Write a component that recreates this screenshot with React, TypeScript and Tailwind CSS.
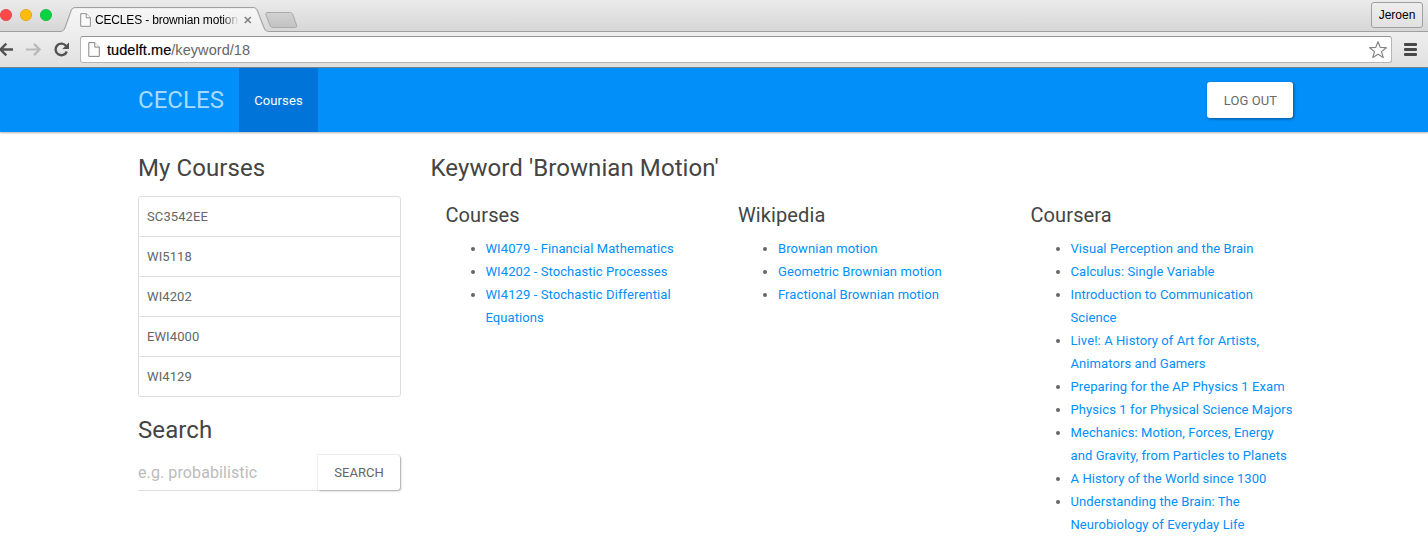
import React from "react";

const courses = ["SC3542EE", "WI5118", "WI4202", "EWI4000", "WI4129"];

const columns = [
  {
    title: "Courses",
    links: [
      "WI4079 - Financial Mathematics",
      "WI4202 - Stochastic Processes",
      "WI4129 - Stochastic Differential Equations",
    ],
  },
  {
    title: "Wikipedia",
    links: ["Brownian motion", "Geometric Brownian motion", "Fractional Brownian motion"],
  },
  {
    title: "Coursera",
    links: [
      "Visual Perception and the Brain",
      "Calculus: Single Variable",
      "Introduction to Communication Science",
      "Live!: A History of Art for Artists, Animators and Gamers",
      "Preparing for the AP Physics 1 Exam",
      "Physics 1 for Physical Science Majors",
      "Mechanics: Motion, Forces, Energy and Gravity, from Particles to Planets",
      "A History of the World since 1300",
      "Understanding the Brain: The Neurobiology of Everyday Life",
    ],
  },
];

function PageIcon({ className }: { className: string }) {
  return (
    <svg viewBox="0 0 12 15" className={className} fill="#fbfbfb" stroke="#858585" strokeWidth="1">
      <path d="M.8.6h6L11.300 5.100v9.300H.8z" />
      <path d="M6.800.6v4.500h4.500" />
    </svg>
  );
}

function TabStrip() {
  return (
    <div className="relative h-8 bg-linear-to-b from-[#ebebeb] to-[#d6d6d6]">
      <svg className="absolute inset-0 h-8 w-full" fill="none">
        <defs>
          <linearGradient id="tab" x1="0" y1="0" x2="0" y2="1">
            <stop offset="0" stopColor="#f6f6f6" />
            <stop offset="1" stopColor="#eeeeee" />
          </linearGradient>
          <linearGradient id="newtab" x1="0" y1="0" x2="0" y2="1">
            <stop offset="0" stopColor="#d2d2d2" />
            <stop offset="1" stopColor="#c2c2c2" />
          </linearGradient>
        </defs>
        <circle cx="6" cy="15" r="5.6" fill="#fc4848" stroke="#e33e41" strokeWidth=".8" />
        <circle cx="26" cy="15" r="5.6" fill="#fdbc0a" stroke="#e0a010" strokeWidth=".8" />
        <circle cx="46" cy="15" r="5.6" fill="#0ad341" stroke="#12b238" strokeWidth=".8" />
        <path
          d="M0 31.500H60C63 31.500 64 30 65 27.500L70.500 12C71.500 9 72.500 7.500 75.500 7.500H253C256 7.500 257 9 258 12L264 27.500C265 30 266 31.500 269 31.500H1428"
          stroke="#a0a0a0"
        />
        <path
          d="M61 32C63.500 31.500 65 30.500 66 28L71.500 12.500C72.300 9.500 73.500 8.500 76 8.500H252.500C255 8.500 256.200 9.500 257 12.500L263 28C264 30.500 265.500 31.500 268 32Z"
          fill="url(#tab)"
        />
        <path
          d="M268 12.500H289.500C291.500 12.500 292.500 13.500 293 15L296.500 25C297 27 296.500 27.500 294.500 27.500H274C272 27.500 270.500 27 270 25.500L266 15C265.500 13.500 266 12.500 268 12.500Z"
          fill="url(#newtab)"
          stroke="#a9a9a9"
        />
        <path d="M244.800 17L250.800 23M250.800 17L244.800 23" stroke="#808080" strokeWidth="1.600" />
      </svg>
      <div className="absolute left-20 top-[13px] flex items-center">
        <PageIcon className="h-3.5 w-[11px]" />
      </div>
      <div className="absolute left-[95px] top-[12px] h-4 w-[144px] overflow-hidden whitespace-nowrap font-['Liberation_Sans',sans-serif] text-[12px] leading-4 tracking-[-0.160px] text-black [mask-image:linear-gradient(to_right,black_88%,transparent)]">
        CECLES - brownian motion
      </div>
      <div className="absolute right-[5px] top-[2px] flex h-[26px] w-[52px] items-center justify-center rounded-[3px] border border-[#a0a0a0] bg-linear-to-b from-[#eeeeee] to-[#e1e1e1] font-['Liberation_Sans',sans-serif] text-xs text-black">
        Jeroen
      </div>
    </div>
  );
}

function Toolbar() {
  return (
    <div className="flex h-9 items-center border-b border-[#7d868c] bg-linear-to-b from-[#eeeeee] to-[#e0e0e0]">
      <svg className="h-[35px] w-20 shrink-0" viewBox="0 0 80 35" fill="none" strokeWidth="2.400">
        <path d="M13 17.500H1M6.300 11.700L.5 17.500L6.300 23.300" stroke="#525252" />
        <path d="M26 17.500H39M34 11.900L39.600 17.500L34 23.100" stroke="#b9b9b9" strokeWidth="2.200" />
        <path d="M66.200 14.200A5.800 5.800 0 1 0 66.800 19.500" stroke="#525252" />
        <path d="M69 10.500V17H62.300Z" fill="#525252" />
      </svg>
      <div className="flex h-[27px] w-[1312px] items-center rounded-[3px] border border-[#b5b5b5] border-t-[#969696] bg-white pl-[7px] pr-[3px]">
        <PageIcon className="h-[15px] w-3" />
        <div className="ml-[7px] grow font-['Liberation_Sans',sans-serif] text-[14.500px] leading-5 tracking-[0.060px] text-[#666]">
          <span className="text-black [-webkit-text-stroke:0.200px_black]">tudelft.me</span>/keyword/18
        </div>
        <svg className="h-5 w-5" viewBox="0 0 20 20" fill="white" stroke="#858585" strokeWidth="1.200" strokeLinejoin="round">
          <path d="M10 1.700L12.200 7.400L18.300 7.700L13.500 11.600L15.200 17.600L10 14.200L4.800 17.600L6.500 11.600L1.700 7.700L7.800 7.400Z" />
        </svg>
      </div>
      <div className="ml-3 flex w-[13px] flex-col gap-0.5">
        <div className="h-[3px] rounded-[1px] bg-[#484848]" />
        <div className="h-[3px] rounded-[1px] bg-[#484848]" />
        <div className="h-[3px] rounded-[1px] bg-[#484848]" />
      </div>
    </div>
  );
}

function Navbar() {
  return (
    <nav className="flex h-16 items-center bg-[#028ffa] pl-[138px] pr-[135px] shadow-[0_1px_2px_rgba(0,0,0,0.3)]">
      <a className="w-[101px] text-2xl leading-[23px] tracking-[0.050px] text-[#a5dbfd]">CECLES</a>
      <a className="flex h-16 w-[79px] items-center justify-center bg-[#0174d9] pt-0.5 text-[13px] tracking-[0.100px] text-white">
        Courses
      </a>
      <button className="ml-auto h-9 w-[86px] rounded-[3px] bg-white pt-0.5 pl-px text-[13px] tracking-[0.100px] text-[#6a6a6a] shadow-[1px_1px_3px_rgba(0,0,0,0.4)]">
        LOG OUT
      </button>
    </nav>
  );
}

function Sidebar() {
  return (
    <aside className="w-[262.500px] shrink-0">
      <h1 className="text-2xl leading-[25px] tracking-[0.080px] text-[#444]">My Courses</h1>
      <ul className="mt-[15px] divide-y divide-[#ddd] rounded-[3px] border border-[#ddd]">
        {courses.map((course) => (
          <li key={course} className="h-10 px-2 text-[13px] leading-10 tracking-[0.100px] last:h-[39px]">
            {course}
          </li>
        ))}
      </ul>
      <h1 className="mt-[21px] text-2xl leading-[25px] tracking-[0.080px] text-[#444]">Search</h1>
      <form className="mt-[11px] flex">
        <input
          className="h-[37px] w-[180px] shrink-0 border-b border-[#ddd] text-base tracking-[0.100px] outline-none placeholder:text-[#bbb]"
          placeholder="e.g. probabilistic"
        />
        <button
          type="button"
          className="mt-px h-[35px] w-[82px] rounded-r-[3px] text-[13px] text-[#666] shadow-[1px_1px_2px_rgba(0,0,0,0.3),0_0_0_1px_rgba(0,0,0,0.06)]"
        >
          SEARCH
        </button>
      </form>
    </aside>
  );
}

export default function App() {
  return (
    <div className="h-[545px] overflow-hidden bg-white font-[Roboto,sans-serif] text-[13px] text-[#666]">
      <TabStrip />
      <Toolbar />
      <Navbar />
      <div className="flex pl-[138px] pt-6">
        <Sidebar />
        <main className="ml-[30px] w-[877.500px]">
          <h1 className="text-2xl leading-[25px] tracking-[0.080px] text-[#444]">Keyword 'Brownian Motion'</h1>
          <div className="mt-[23px] grid grid-cols-3">
            {columns.map((column) => (
              <section key={column.title} className="px-[15px]">
                <h2 className="text-[20px] leading-[22px] tracking-[0.100px] text-[#444]">{column.title}</h2>
                <ul className="mt-[11px] list-disc pl-10 leading-[23px] tracking-[0.090px]">
                  {column.links.map((link) => (
                    <li key={link}>
                      <a className="text-[#028ffa]">{link}</a>
                    </li>
                  ))}
                </ul>
              </section>
            ))}
          </div>
        </main>
      </div>
    </div>
  );
}
